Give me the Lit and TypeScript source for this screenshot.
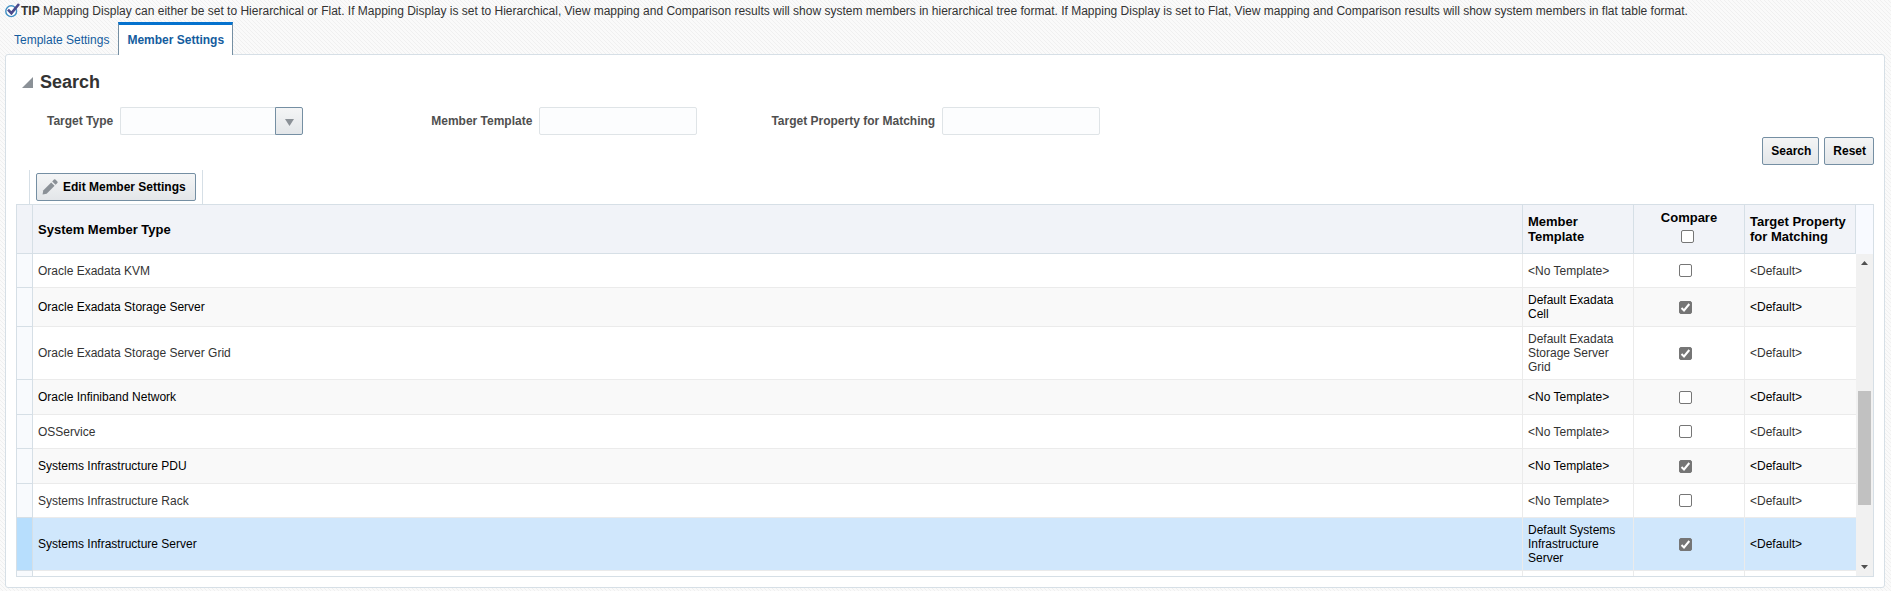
import { LitElement, html, css } from "lit";
import { customElement, property } from "lit/decorators.js";
import { classMap } from "lit/directives/class-map.js";

interface MemberRow {
  type: string;
  template: string;
  compare: boolean;
  property: string;
  selected?: boolean;
}

const NONE = "<No Template>";
const DEFAULT = "<Default>";

const ROWS: MemberRow[] = [
  { type: "Oracle Exadata KVM", template: NONE, compare: false, property: DEFAULT },
  { type: "Oracle Exadata Storage Server", template: "Default Exadata Cell", compare: true, property: DEFAULT },
  { type: "Oracle Exadata Storage Server Grid", template: "Default Exadata Storage Server Grid", compare: true, property: DEFAULT },
  { type: "Oracle Infiniband Network", template: NONE, compare: false, property: DEFAULT },
  { type: "OSService", template: NONE, compare: false, property: DEFAULT },
  { type: "Systems Infrastructure PDU", template: NONE, compare: true, property: DEFAULT },
  { type: "Systems Infrastructure Rack", template: NONE, compare: false, property: DEFAULT },
  { type: "Systems Infrastructure Server", template: "Default Systems Infrastructure Server", compare: true, property: DEFAULT, selected: true },
];

const base = css`
  :host,
  * {
    box-sizing: border-box;
  }
  button {
    height: 28px;
    padding: 0 7px 0 8px;
    border: 1px solid #758fa3;
    border-radius: 2px;
    background: linear-gradient(#f4f5f6, #e3e6e9);
    color: #000;
    font: bold 12px "Liberation Sans", Arial, sans-serif;
  }
  input[type="checkbox"] {
    appearance: none;
    width: 13px;
    height: 13px;
    margin: 0;
    border: 1px solid #767676;
    border-radius: 2px;
    background: #fff;
    display: block;
  }
  input[type="checkbox"]:checked {
    background: #757575 url("data:image/svg+xml,%3Csvg xmlns='http://www.w3.org/2000/svg' viewBox='0 0 11 11'%3E%3Cpath d='M1.5 6L4 8.5L9.3 2' fill='none' stroke='white' stroke-width='2'/%3E%3C/svg%3E");
  }
`;

@customElement("member-search")
export class MemberSearch extends LitElement {
  static styles = [
    base,
    css`
      :host {
        display: block;
        padding: 16px 0 0;
      }
      .title {
        display: flex;
        align-items: center;
        gap: 7px;
        padding-left: 6px;
      }
      .title svg {
        display: block;
      }
      h2 {
        margin: 0;
        font-size: 18px;
        line-height: 22px;
        color: #333;
      }
      .fields {
        display: flex;
        padding: 14px 0 0 31px;
      }
      .field {
        display: flex;
        align-items: center;
        gap: 7px;
        font-weight: bold;
        color: #4f4f4f;
      }
      .first {
        margin-right: 128px;
      }
      .second {
        margin-right: 74px;
      }
      input {
        width: 158px;
        height: 28px;
        padding: 0 6px;
        border: 1px solid #dfe4e7;
        border-radius: 2px;
        background: #fcfdfe;
        font: 12px "Liberation Sans", Arial, sans-serif;
      }
      .combo {
        display: flex;
      }
      .combo input {
        width: 155px;
        border-right: 0;
        border-radius: 2px 0 0 2px;
      }
      .combo button {
        width: 28px;
        padding: 3px 0 0;
        border-radius: 0 2px 2px 0;
        display: grid;
        place-items: center;
      }
      .actions {
        display: flex;
        justify-content: flex-end;
        gap: 5px;
        padding-top: 2px;
      }
    `,
  ];

  render() {
    return html`
      <div class="title">
        <svg width="11" height="11" viewBox="0 0 11 11"><path d="M11 0V11H0Z" fill="#8b9197" /></svg>
        <h2>Search</h2>
      </div>
      <div class="fields">
        <div class="field first">
          <label for="type">Target Type</label>
          <div class="combo">
            <input id="type" type="text" />
            <button aria-label="Show target types">
              <svg width="9" height="7" viewBox="0 0 9 7"><path d="M0 0H9L4.5 7Z" fill="#8b9197" /></svg>
            </button>
          </div>
        </div>
        <div class="field second">
          <label for="template">Member Template</label>
          <input id="template" type="text" />
        </div>
        <div class="field">
          <label for="prop">Target Property for Matching</label>
          <input id="prop" type="text" />
        </div>
      </div>
      <div class="actions">
        <button>Search</button>
        <button>Reset</button>
      </div>
    `;
  }
}

@customElement("member-table")
export class MemberTable extends LitElement {
  @property({ attribute: false }) rows: MemberRow[] = [];

  static styles = [
    base,
    css`
      :host {
        display: flex;
        flex-direction: column;
        min-height: 0;
        padding-top: 5px;
      }
      .toolbar {
        display: flex;
        align-self: flex-start;
        margin-left: 13px;
        padding: 3px 6px;
        border: solid #d6dfe6;
        border-width: 0 1px;
      }
      .edit {
        display: flex;
        align-items: center;
        gap: 5px;
        padding: 0 9px 0 5px;
      }
      .frame {
        display: flex;
        flex: 1;
        min-height: 0;
        border: 1px solid #d6dfe6;
      }
      .view {
        flex: 1;
        overflow: hidden;
      }
      table {
        width: 100%;
        table-layout: fixed;
        border-collapse: separate;
        border-spacing: 0;
      }
      .c-gutter {
        width: 16px;
      }
      .c-side {
        width: 111px;
      }
      th,
      td {
        padding: 5px;
        text-align: left;
        vertical-align: middle;
        line-height: 14px;
      }
      th {
        height: 49px;
        padding: 0 5px;
        background: #f1f3f8;
        border: solid #d6dfe6;
        border-width: 0 1px 1px 0;
        font-size: 13px;
        line-height: 15px;
        color: #000;
      }
      td {
        height: 34px;
        border: solid #ebebeb;
        border-width: 0 1px 1px 0;
        color: #333;
      }
      tr:nth-child(even) td {
        height: 35px;
      }
      td:last-child {
        border-right: 0;
      }
      .gutter {
        padding: 0;
        background: #f8fafd;
        border-color: #d6dfe6;
      }
      tbody tr:nth-child(even) td:not(.gutter) {
        background: #f9f9f9;
        color: #000;
      }
      tbody tr.selected td:not(.gutter) {
        background: #d0e7fc;
      }
      tr.selected .gutter {
        background: #b7defd;
      }
      .pick {
        display: flex;
        flex-direction: column;
        align-items: center;
        padding-right: 7px;
      }
      .all {
        display: flex;
        flex-direction: column;
        align-items: center;
        gap: 5px;
        padding-bottom: 5px;
      }
      .all input {
        margin-right: 3px;
      }
      .bar {
        display: flex;
        flex-direction: column;
        width: 17px;
        background: #f1f1f1;
      }
      .corner {
        height: 49px;
        background: #f8faff;
      }
      .track {
        flex: 1;
        display: flex;
        flex-direction: column;
        align-items: center;
        justify-content: space-between;
        padding: 7px 0;
      }
      .track svg {
        display: block;
      }
      .slot {
        flex: 1;
        display: grid;
        grid-template-rows: 126fr 114fr 60fr;
      }
      .thumb {
        grid-row: 2;
        width: 13px;
        background: #c1c1c1;
      }
    `,
  ];

  render() {
    return html`
      <div class="toolbar">
        <button class="edit">
          <svg width="16" height="16" viewBox="0 0 16 16">
            <path d="M1.2 11.4L9.2 3.4L12.6 6.8L4.6 14.8L.6 15.6Z" fill="#8b9197" />
            <path d="M10.2 2.4L12 .6Q12.7 0 13.4 .6L15.4 2.6Q16 3.4 15.4 4L13.6 5.8Z" fill="#8b9197" />
          </svg>
          Edit Member Settings
        </button>
      </div>
      <div class="frame">
        <div class="view">
          <table>
            <colgroup>
              <col class="c-gutter" />
              <col />
              <col class="c-side" />
              <col class="c-side" />
              <col class="c-side" />
            </colgroup>
            <thead>
              <tr>
                <th aria-label="Row"></th>
                <th>System Member Type</th>
                <th>Member Template</th>
                <th>
                  <label class="all">Compare <input type="checkbox" /></label>
                </th>
                <th>Target Property for Matching</th>
              </tr>
            </thead>
            <tbody>
              ${this.rows.map(
                (r) => html`<tr class=${classMap({ selected: !!r.selected })}>
                  <td class="gutter"></td>
                  <td>${r.type}</td>
                  <td>${r.template}</td>
                  <td>
                    <div class="pick">
                      <input type="checkbox" aria-label="Compare ${r.type}" .checked=${r.compare} />
                    </div>
                  </td>
                  <td>${r.property}</td>
                </tr>`
              )}
              <tr>
                <td class="gutter"></td>
                <td></td>
                <td></td>
                <td></td>
                <td></td>
              </tr>
            </tbody>
          </table>
        </div>
        <div class="bar">
          <div class="corner"></div>
          <div class="track">
            <svg width="7" height="4" viewBox="0 0 7 4"><path d="M0 4L3.5 0L7 4Z" fill="#505050" /></svg>
            <div class="slot"><div class="thumb"></div></div>
            <svg width="7" height="4" viewBox="0 0 7 4"><path d="M0 0L3.5 4L7 0Z" fill="#505050" /></svg>
          </div>
        </div>
      </div>
    `;
  }
}

@customElement("app-root")
export class AppRoot extends LitElement {
  static styles = [
    base,
    css`
      :host {
        display: flex;
        flex-direction: column;
        height: 100vh;
        padding: 2px 6px 3px 5px;
        background: #fafafa
          url("data:image/svg+xml,%3Csvg xmlns='http://www.w3.org/2000/svg' width='4' height='4' shape-rendering='crispEdges' fill='%23f0f0f0'%3E%3Cpath d='M0 0h1v1H0zM1 1h1v1H1zM2 2h1v1H2zM3 3h1v1H3z'/%3E%3C/svg%3E");
        font: 12px/14px "Liberation Sans", Arial, sans-serif;
        color: #333;
      }
      .tip {
        display: flex;
        align-items: center;
        height: 17px;
        margin: 0;
        gap: 1px;
      }
      .tabs {
        display: flex;
        height: 33px;
        margin-top: 3px;
      }
      .tabs a {
        padding: 11px 9px 0;
        color: #145c9e;
        text-decoration: none;
      }
      .tabs .active {
        position: relative;
        padding: 8px 8px 0;
        border: 1px solid #758fa3;
        border-top: 3px solid #0572ce;
        border-bottom: 0;
        background: #fff;
        font-weight: bold;
      }
      .panel {
        display: flex;
        flex-direction: column;
        flex: 1;
        min-height: 0;
        margin-top: -1px;
        padding: 0 10px 10px;
        border: 1px solid #d6dfe6;
        border-radius: 3px;
        background: #fff;
      }
      member-table {
        flex: 1;
      }
    `,
  ];

  render() {
    return html`
      <p class="tip"><svg width="15" height="15" viewBox="0 0 15 15">
          <circle cx="6.2" cy="8.2" r="5.4" fill="#fff" stroke="#3f8fc4" stroke-width="1.4" />
          <path d="M3 6.6L6.4 10.2L14 1" fill="none" stroke="#4b4a8c" stroke-width="2.6" />
        </svg><span><b>TIP</b> Mapping Display can either be set to Hierarchical or Flat. If Mapping Display is set to Hierarchical, View mapping and Comparison results will show system members in hierarchical tree format. If Mapping Display is set to Flat, View mapping and Comparison results will show system members in flat table format.</span></p>
      <nav class="tabs">
        <a href="#template">Template Settings</a>
        <a href="#member" class="active">Member Settings</a>
      </nav>
      <div class="panel">
        <member-search></member-search>
        <member-table .rows=${ROWS}></member-table>
      </div>
    `;
  }
}
